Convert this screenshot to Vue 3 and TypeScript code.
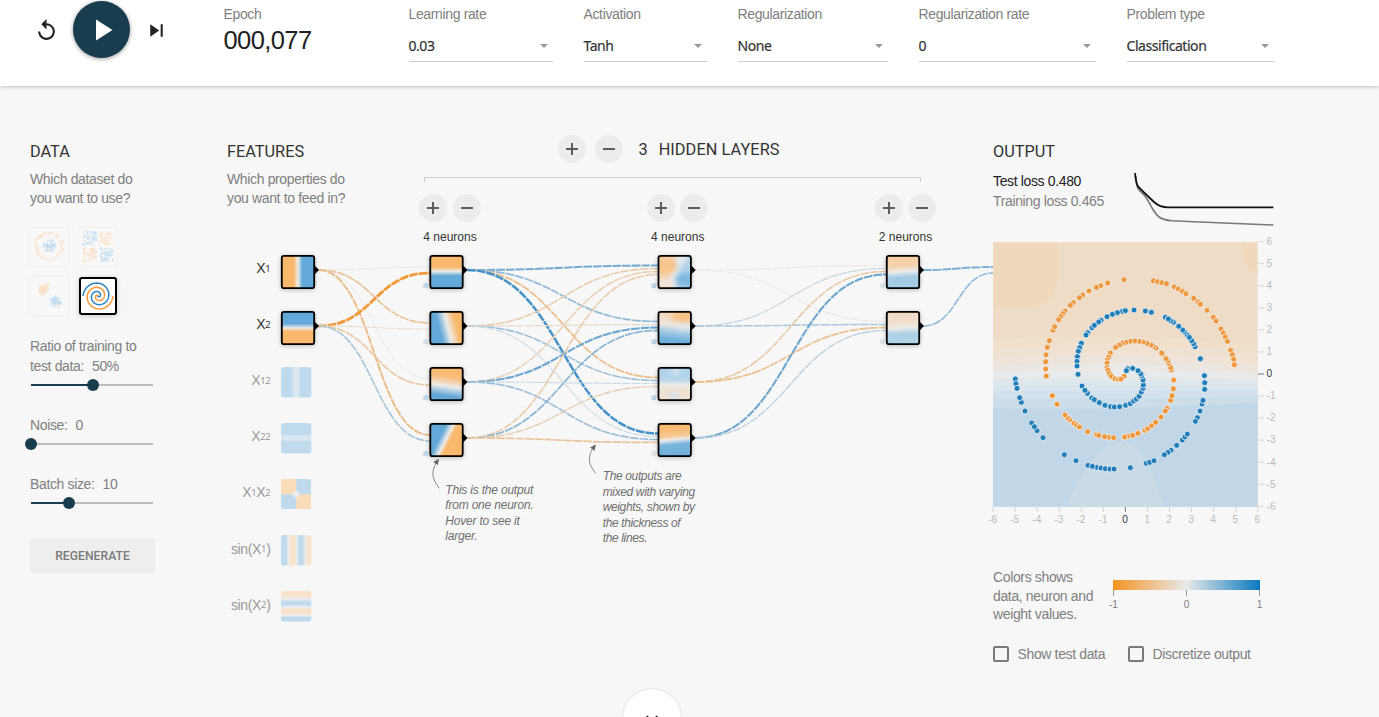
<script setup lang="ts">
type Pt = [number, number]
type Stop = [number, string]
interface Blob { cx: number; cy: number; rx: number; ry: number; fill: string }
interface Unit { id: string; x: number; y: number; dir: [number, number, number, number]; stops: Stop[]; blobs?: Blob[]; bias?: string }

const selects = [
  { label: 'Learning rate', value: '0.03', width: 144 },
  { label: 'Activation', value: 'Tanh', width: 123 },
  { label: 'Regularization', value: 'None', width: 150 },
  { label: 'Regularization rate', value: '0', width: 177 },
  { label: 'Problem type', value: 'Classification', width: 147 },
]

const sliders = [
  { lines: ['Ratio of training to', 'test data:'], value: '50%', at: 50.5 },
  { lines: ['Noise:'], value: '0', at: 0 },
  { lines: ['Batch size:'], value: '10', at: 31 },
]

const layers = ['4 neurons', '4 neurons', '2 neurons']

// Seeded generator, so the dataset thumbnails are the same on each load.
let seed = 11
const rnd = () => {
  seed = (seed * 16807) % 2147483647
  return seed / 2147483647
}
interface Dot { x: number; y: number; c: string }
const ring: Dot[] = []
const xor: Dot[] = []
const gauss: Dot[] = []
for (let i = 0; i < 95; i++) {
  const a = rnd() * Math.PI * 2
  const r1 = rnd() * 6.5
  const r2 = 11 + rnd() * 4
  ring.push({ x: 19.5 + r1 * Math.cos(a), y: 18 + r1 * Math.sin(a), c: 'b' })
  ring.push({ x: 19 + r2 * Math.cos(a * 3), y: 18 + r2 * Math.sin(a * 3), c: 'o' })
}
for (let i = 0; i < 300; i++) {
  const x = 3.5 + rnd() * 31
  const y = 3 + rnd() * 31
  if (Math.abs(x - 19) < 1.2 || Math.abs(y - 18.5) < 1.2) continue
  xor.push({ x, y, c: x < 19 === y < 18.5 ? 'b' : 'o' })
}
for (let i = 0; i < 90; i++) {
  const g = () => (rnd() + rnd() + rnd() - 1.5) * 5.2
  gauss.push({ x: 14 + g(), y: 12.5 + g(), c: 'o' })
  gauss.push({ x: 25.5 + g(), y: 24.5 + g(), c: 'b' })
}
const faintSets = [ring, xor, gauss]

const spiral = (delta: number) => {
  const out: string[] = []
  for (let i = 0; i <= 120; i++) {
    const r = (i / 120) * 15
    const t = (1.75 * i * 2 * Math.PI) / 120 + delta
    out.push(`${(17 + r * Math.sin(t)).toFixed(2)},${(17 + r * Math.cos(t)).toFixed(2)}`)
  }
  return out.join(' ')
}

const O = '#f9b96d'
const B = '#62a8d8'
const W = '#ecebe9'
const LB = '#bfdaed'
const LO = '#fbdcb9'
const PB = '#d8e7f0'

const rows = [270, 326, 382, 438]
const units: Unit[] = [
  { id: 'x1', x: 281, y: 270, dir: [0, 0, 1, 0], stops: [[0.36, O], [0.5, W], [0.64, B]] },
  { id: 'x2', x: 281, y: 326, dir: [0, 0, 0, 1], stops: [[0.36, B], [0.5, W], [0.6, O]] },
  { id: 'a1', x: 429.5, y: 270, dir: [0, 0, 0, 1], bias: '#c6dbea', stops: [[0.35, O], [0.48, W], [0.62, B]] },
  { id: 'a2', x: 429.5, y: 326, dir: [0, 0.25, 1, 0], bias: '#d8e0e6', stops: [[0.2, B], [0.46, W], [0.72, O]] },
  { id: 'a3', x: 429.5, y: 382, dir: [0.15, 0, 0, 1], bias: '#c6dbea', stops: [[0.05, O], [0.25, '#f8c184'], [0.5, W], [0.8, B]] },
  { id: 'a4', x: 429.5, y: 438, dir: [0.1, 0.2, 0.9, 0.6], bias: '#c6dbea', stops: [[0.3, B], [0.52, W], [0.66, O]] },
  {
    id: 'b1', x: 657.7, y: 270, dir: [0, 0, 1, 0.3], bias: '#bdd6e8', stops: [[0, '#f6cb9b'], [0.4, '#f3d3b0'], [0.6, '#e3e9ee'], [0.85, '#b0d2e8']],
    blobs: [{ cx: 8, cy: 10, rx: 10, ry: 8, fill: '#f7c48d' }, { cx: 5, cy: 28, rx: 12, ry: 5, fill: '#f1e6da' }, { cx: 28, cy: 24, rx: 11, ry: 7, fill: '#7db7de' }, { cx: 24, cy: 2, rx: 5, ry: 5, fill: '#e6ebee' }],
  },
  {
    id: 'b2', x: 657.7, y: 326, dir: [0, 0.1, -0.1, 1], bias: '#bdd6e8', stops: [[0, '#f2d5b4'], [0.28, '#ece6df'], [0.5, '#a9cde5'], [0.8, '#6db0dc']],
    blobs: [{ cx: 26, cy: 4, rx: 12, ry: 6, fill: '#f8c084' }, { cx: 3, cy: 7, rx: 7, ry: 4, fill: '#f0e2d2' }, { cx: 25, cy: 15, rx: 8, ry: 2.5, fill: '#dfe8ee' }],
  },
  {
    id: 'b3', x: 657.7, y: 382, dir: [0, 0, 0, 1], bias: '#bdd6e8', stops: [[0, '#a9cfe7'], [0.38, '#b9d6ea'], [0.52, '#eceae7'], [0.75, '#f1e1cf'], [1, '#efe2d4']],
    blobs: [{ cx: 17, cy: 3, rx: 5, ry: 4, fill: '#d4e4ee' }, { cx: 15, cy: 28, rx: 5, ry: 4, fill: '#d2e3ee' }],
  },
  { id: 'b4', x: 657.7, y: 438, dir: [0, 0, 0.1, 1], bias: '#e0e5e8', stops: [[0.2, '#f9bb72'], [0.42, '#f6c994'], [0.53, W], [0.68, '#79b5dd'], [1, '#6fb1dc']] },
  { id: 'c1', x: 886, y: 270, dir: [0, 0, 0.08, 1], bias: '#dde4e9', stops: [[0, '#f4cfa4'], [0.35, '#f4d2ab'], [0.52, W], [0.7, '#a3cbe5'], [1, '#a6cde5']] },
  { id: 'c2', x: 886, y: 326, dir: [0, 0, 0.05, 1], bias: '#dde4e9', stops: [[0, '#f1dac0'], [0.35, '#f1dfcc'], [0.52, W], [0.7, '#acd0e6'], [1, '#b3d3e7']] },
]

interface Dim { id: string; y: number; dir: [number, number, number, number]; stops: Stop[] }
const dimmed: Dim[] = [
  { id: 'sq1', y: 367, dir: [0, 0, 1, 0], stops: [[0.34, LB], [0.42, PB], [0.58, PB], [0.66, LB]] },
  { id: 'sq2', y: 423, dir: [0, 0, 0, 1], stops: [[0.36, LB], [0.43, PB], [0.55, PB], [0.62, LB]] },
  { id: 'sin1', y: 535, dir: [0, 0, 1, 0], stops: [[0, LB], [0.15, LB], [0.27, '#f0ece8'], [0.36, '#fae2c8'], [0.45, '#fae2c8'], [0.53, '#e9edf0'], [0.6, LB], [0.7, LB], [0.82, '#f0ece8'], [0.92, '#fae2c8']] },
  { id: 'sin2', y: 591, dir: [0, 0, 0, 1], stops: [[0, '#fae2c8'], [0.14, '#fae2c8'], [0.25, '#eeedec'], [0.36, LB], [0.44, LB], [0.53, '#eeedec'], [0.6, '#fae2c8'], [0.7, '#fae2c8'], [0.8, '#eeedec'], [0.87, LB]] },
]

const names = [
  { y: 273.2, on: true, parts: ['X', '1'] },
  { y: 329.2, on: true, parts: ['X', '2'] },
  { y: 385.2, on: false, parts: ['X', '12'] },
  { y: 441.2, on: false, parts: ['X', '22'] },
  { y: 497.2, on: false, parts: ['X', '1', 'X', '2'] },
  { y: 553.5, on: false, parts: ['sin(X', '1', ')'] },
  { y: 609.5, on: false, parts: ['sin(X', '2', ')'] },
]

// Weights by layer: weights[source][target]; negative is orange, positive is blue.
const stages = [
  { from: 318, to: 430, weights: [[-0.02, -0.42, -0.02, -0.52], [-0.95, -0.1, -0.38, 0.33]] },
  { from: 467, to: 658, weights: [[0.56, 0.42, -0.48, 0.8], [-0.33, -0.16, 0.35, 0.12], [-0.3, 0.6, 0.12, 0.37], [-0.34, 0.45, -0.28, -0.42]] },
  { from: 695, to: 886, weights: [[-0.02, -0.02], [0.16, 0.3], [-0.36, -0.46], [0.6, 0.22]] },
  { from: 923, to: 993, weights: [[0.53], [0.4]] },
]
const mix = (a: number[], b: number[], k: number) => `rgb(${a.map((v, i) => Math.round(v + (b[i] - v) * k)).join(',')})`
const links = stages.flatMap(s => {
  const n = s.weights.length
  return s.weights.flatMap((ws, i) => ws.map((w, j) => {
    const sy = rows[i]
    const ty = rows[j] + ((i - (n - 1) / 2) / n) * 12
    const mx = (s.from + s.to) / 2
    const k = Math.abs(w)
    return {
      d: `M${s.from},${sy}C${mx},${sy} ${mx},${ty} ${s.to},${ty}`,
      color: mix([229, 230, 231], w < 0 ? [242, 145, 35] : [18, 120, 190], Math.min(1, k * 0.95)),
      width: 0.9 + k * 2,
    }
  }))
})

const orange: Pt[] = [[417, 449], [368, 459], [347, 467], [334, 472], [312, 483], [293, 495], [283, 503], [265, 518], [256, 526], [240, 543], [233, 551], [227, 560], [221, 569], [204, 601], [209, 590], [193, 632], [187, 652], [183, 674], [182, 695], [182, 717], [184, 738], [202, 797], [216, 823], [254, 869], [247, 863], [240, 855], [267, 880], [275, 886], [283, 891], [308, 905], [334, 914], [341, 916], [371, 922], [359, 920], [386, 923], [428, 919], [419, 921], [443, 916], [459, 910], [480, 901], [488, 896], [500, 887], [512, 877], [528, 861], [546, 835], [541, 843], [557, 811], [561, 797], [565, 776], [566, 750], [559, 720], [557, 713], [551, 700], [548, 693], [543, 686], [533, 673], [530, 669], [513, 654], [505, 649], [498, 645], [486, 640], [474, 636], [462, 634], [449, 633], [435, 634], [423, 637], [412, 640], [403, 645], [392, 652], [376, 669], [371, 681], [367, 690], [366, 699], [366, 713], [369, 721], [373, 731], [379, 739], [390, 746], [400, 748], [417, 739], [408, 747],
  [505, 452], [518, 455], [531, 458], [544, 461], [568, 471], [580, 477], [592, 484], [603, 491], [635, 513], [626, 505], [640, 517], [646, 523], [666, 541], [685, 562], [693, 573], [708, 597], [715, 609], [721, 621], [727, 634], [737, 661], [742, 674], [746, 688], [748, 704]]
const blue: Pt[] = [[91, 747], [93, 761], [96, 775], [109, 817], [104, 803], [120, 843], [140, 879], [156, 902], [148, 890], [174, 923], [238, 974], [273, 992], [309, 1006], [335, 1012], [322, 1009], [348, 1014], [361, 1016], [375, 1017], [387, 1017], [436, 1013], [484, 1000], [494, 997], [507, 992], [558, 961], [549, 967], [538, 974], [575, 946], [592, 930], [600, 921], [607, 912], [637, 863], [631, 874], [645, 843], [651, 822], [654, 811], [659, 778], [659, 758], [658, 737], [646, 686], [630, 650], [626, 641], [620, 632], [606, 614], [598, 605], [593, 600], [613, 622], [581, 589], [565, 577], [557, 572], [541, 562], [550, 567], [499, 547], [481, 543], [447, 540], [412, 544], [421, 542], [397, 548], [382, 553], [366, 560], [348, 571], [341, 576], [321, 593], [328, 586], [308, 608], [303, 615], [289, 640], [284, 653], [280, 664], [277, 680], [276, 694], [276, 708], [279, 733], [291, 768], [307, 790], [300, 781], [320, 804], [328, 809], [343, 818], [360, 826], [377, 830], [388, 831], [404, 830], [422, 826], [436, 821], [446, 813], [454, 807], [462, 799], [469, 786], [474, 775], [475, 765], [474, 750], [470, 737], [467, 731], [459, 722], [428, 716], [424, 722], [443, 715]]

// Each band runs down from a curved upper edge: left, middle and right heights.
const bands: [number, number, number, string][] = [
  [632, 620, 650, '#f0dfca'],
  [655, 643, 672, '#efe1d0'],
  [678, 664, 694, '#eee3d6'],
  [698, 683, 714, '#ece5dd'],
  [716, 702, 730, '#ebe8e5'],
  [730, 720, 742, '#e8eaeb'],
  [746, 740, 752, '#e1e8ec'],
  [762, 758, 764, '#dae5ec'],
  [782, 782, 778, '#d2e1eb'],
  [806, 806, 796, '#cadde9'],
  [834, 834, 818, '#c1d7e7'],
]
const bandPath = (b: [number, number, number, string]) => `M24,${b[0]}Q420,${b[1] * 2 - (b[0] + b[2]) / 2} 818,${b[2]}V1130H24Z`

const ticks = Array.from({ length: 13 }, (_, i) => i - 6)
const unitPx = 22.05
</script>

<template>
  <div class="page">
    <header class="bar">
      <div class="controls">
        <svg class="reset" viewBox="0 0 24 24"><path d="M12 5V1L7 6l5 5V7c3.31 0 6 2.69 6 6s-2.69 6-6 6-6-2.69-6-6H4c0 4.42 3.58 8 8 8s8-3.58 8-8-3.58-8-8-8z" /></svg>
        <button class="play"><svg viewBox="0 0 24 24"><path d="M8 5v14l11-7z" /></svg></button>
        <svg class="step" viewBox="0 0 24 24"><path d="M6 18l8.5-6L6 6v12zM16 6v12h2V6h-2z" /></svg>
      </div>
      <div class="epoch">
        <div class="label">Epoch</div>
        <div class="count">000,077</div>
      </div>
      <div class="selects">
        <div v-for="s in selects" :key="s.label" class="select" :style="{ width: s.width + 'px' }">
          <div class="label">{{ s.label }}</div>
          <div class="field"><span>{{ s.value }}</span><i class="caret"></i></div>
        </div>
      </div>
    </header>

    <main class="main">
      <section class="data">
        <h3>Data</h3>
        <p>Which dataset do<br />you want to use?</p>
        <div class="sets">
          <div v-for="(set, k) in faintSets" :key="k" class="set">
            <svg viewBox="0 0 38 38"><circle v-for="(d, i) in set" :key="i" :cx="d.x" :cy="d.y" r=".75" :class="d.c" /></svg>
          </div>
          <div class="set chosen">
            <svg viewBox="0 0 34 34">
              <polyline class="sb" :points="spiral(0)" />
              <polyline class="so" :points="spiral(Math.PI)" />
            </svg>
          </div>
        </div>
        <div v-for="s in sliders" :key="s.value" class="slider">
          <div class="slabel"><template v-for="(l, i) in s.lines" :key="l"><br v-if="i > 0" />{{ l }}</template><span class="val">{{ s.value }}</span></div>
          <div class="track">
            <div class="rail"><div class="fill" :style="{ width: s.at + '%' }"></div></div>
            <div class="knob" :style="{ left: s.at + '%' }"></div>
          </div>
        </div>
        <button class="regen">Regenerate</button>
      </section>

      <section class="net">
        <div class="nethead">
          <div class="feat">
            <h3>Features</h3>
            <p>Which properties do<br />you want to feed in?</p>
          </div>
          <div class="hidden">
            <div class="title">
              <span class="round"><i class="plus"></i></span>
              <span class="round"><i></i></span>
              <b class="n">3</b><b>Hidden layers</b>
            </div>
            <div class="bracket"></div>
            <div class="layers">
              <div v-for="(l, i) in layers" :key="i" class="layer">
                <div class="pair"><span class="round"><i class="plus"></i></span><span class="round"><i></i></span></div>
                <div class="nlabel">{{ l }}</div>
              </div>
            </div>
          </div>
        </div>

        <svg class="graph" viewBox="227 245 766 400">
          <defs>
            <linearGradient v-for="u in [...units, ...dimmed]" :id="'g-' + u.id" :key="u.id" :x1="u.dir[0]" :y1="u.dir[1]" :x2="u.dir[2]" :y2="u.dir[3]">
              <stop v-for="(s, i) in u.stops" :key="i" :offset="s[0]" :stop-color="s[1]" />
            </linearGradient>
            <filter id="soft" x="-80%" y="-80%" width="260%" height="260%"><feGaussianBlur stdDeviation="2.8" /></filter>
            <filter id="dot" x="-80%" y="-80%" width="260%" height="260%"><feGaussianBlur stdDeviation="0.9" /></filter>
            <marker id="tip" markerWidth="7" markerHeight="7" refX="4" refY="3" orient="auto" markerUnits="userSpaceOnUse"><path d="M0,0.2L6,3L0,5.8Z" fill="#666" /></marker>
          </defs>
          <path v-for="(l, i) in links" :key="i" class="link" :d="l.d" :stroke="l.color" :stroke-width="l.width" />

          <text v-for="n in names" :key="n.y" x="270.5" :y="n.y" class="name" :class="{ off: !n.on }"><tspan v-for="(p, i) in n.parts" :key="i" :class="{ small: i % 2 === 1 }" :dy="i % 2 === 1 ? -1.5 : i ? 1.5 : 0">{{ p }}</tspan></text>

          <rect v-for="d in dimmed" :key="d.id" x="281" :y="d.y" width="30.3" height="30.5" rx="2.5" :fill="`url(#g-${d.id})`" />
          <svg x="281" y="479" width="30.3" height="30.3" viewBox="0 0 30 30">
            <clipPath id="round"><rect width="30" height="30" rx="2.5" /></clipPath>
            <g clip-path="url(#round)">
              <rect width="30" height="30" :fill="LB" />
              <path d="M0,0H15V30H30V15H0Z" :fill="LO" />
              <circle cx="15" cy="15" r="3.2" fill="#eef0f1" filter="url(#dot)" />
            </g>
          </svg>

          <g v-for="u in units" :key="u.id">
            <rect v-if="u.bias" :x="u.x - 6.3" :y="u.y + 13.2" width="5" height="5" :fill="u.bias" />
            <path class="port" :d="`M${u.x + 33.5},${u.y - 4.5}L${u.x + 38},${u.y}L${u.x + 33.5},${u.y + 4.5}Z`" />
            <g class="tile">
              <svg :x="u.x + 1" :y="u.y - 14" width="32" height="32" viewBox="0 0 32 32">
                <rect width="32" height="32" :fill="`url(#g-${u.id})`" />
                <ellipse v-for="(b, i) in u.blobs || []" :key="i" :cx="b.cx" :cy="b.cy" :rx="b.rx" :ry="b.ry" :fill="b.fill" filter="url(#soft)" />
              </svg>
              <rect class="frame" :x="u.x + 0.8" :y="u.y - 14.2" width="32.4" height="32.4" rx="2.2" />
            </g>
          </g>

          <path class="arrow" d="M439.3,488.3C431,478 431,470 437.8,460.5" marker-end="url(#tip)" />
          <path class="arrow" d="M595.7,473.3C587,463 588,455 594.6,446" marker-end="url(#tip)" />
          <text class="note">
            <tspan x="445.3" y="493.9">This is the output</tspan>
            <tspan x="445.3" y="509.4">from one neuron.</tspan>
            <tspan x="445.3" y="524.9">Hover to see it</tspan>
            <tspan x="445.3" y="540.4">larger.</tspan>
          </text>
          <text class="note tight">
            <tspan x="602.7" y="480.2">The outputs are</tspan>
            <tspan x="602.7" y="495.7">mixed with varying</tspan>
            <tspan x="602.7" y="511.2">weights, shown by</tspan>
            <tspan x="602.7" y="526.7">the thickness of</tspan>
            <tspan x="602.7" y="542.2">the lines.</tspan>
          </text>
        </svg>
      </section>

      <section class="out">
        <h3>Output</h3>
        <div class="loss">
          <div class="stats">
            <div class="test">Test loss 0.480</div>
            <div class="train">Training loss 0.465</div>
          </div>
          <svg class="chart" viewBox="0 0 140 58">
            <path stroke="#777" stroke-width="1.6" d="M1.6,5C2.2,12 2.4,16 5,19L10.5,24.5Q14,29 18,37Q22,43.5 25,46Q29,49 38,49.8L60,50.8L139.3,54" />
            <path stroke="#111" stroke-width="1.8" d="M1,2C2,10 2,13 4.5,16L10.5,22L20,31Q26,36.4 34,36.4L139.3,36.3" />
          </svg>
        </div>
        <svg class="plot" viewBox="983 236 300 292">
          <svg x="993" y="242" width="264.7" height="264.7" viewBox="24 336 794 794">
            <rect x="24" y="336" width="794" height="794" fill="#efdcc6" />
            <path d="M24,336H218V440Q214,532 120,532H24Z" fill="#f0d8bd" />
            <path d="M772,336V380Q785,425 818,434V336Z" fill="#f0d8bd" />
            <path v-for="(b, i) in bands" :key="i" :d="bandPath(b)" :fill="b[3]" />
            <path d="M242,1130C290,1010 360,935 415,935C475,935 520,1070 534,1130Z" fill="#c9dbe6" />
            <circle v-for="(p, i) in orange" :key="'o' + i" class="pt po" :cx="p[0]" :cy="p[1]" r="9" />
            <circle v-for="(p, i) in blue" :key="'b' + i" class="pt pb" :cx="p[0]" :cy="p[1]" r="9" />
          </svg>
          <g v-for="t in ticks" :key="t" :class="{ zero: t === 0 }" class="tick">
            <line :x1="1125.4 + t * unitPx" :x2="1125.4 + t * unitPx" y1="507" y2="512" />
            <line x1="1258" x2="1264" :y1="374 - t * unitPx" :y2="374 - t * unitPx" />
            <text class="mid" :x="1125 + t * unitPx" y="523">{{ t }}</text>
            <text x="1266.5" :y="377.3 - t * unitPx">{{ t }}</text>
          </g>
        </svg>
        <div class="legend">
          <p>Colors shows<br />data, neuron and<br />weight values.</p>
          <div class="scale">
            <div class="ramp"></div>
            <div class="marks"><span>-1</span><span>0</span><span>1</span></div>
          </div>
        </div>
        <div class="checks">
          <label><i></i>Show test data</label>
          <label><i></i>Discretize output</label>
        </div>
      </section>

      <div class="more"><svg viewBox="0 0 24 24"><path d="M16.59 8.59L12 13.17 7.41 8.59 6 10l6 6 6-6z" /></svg></div>
    </main>
  </div>
</template>

<style>
body {
  margin: 0;
  background: #f7f7f7;
}
</style>

<style scoped>
.page {
  height: 717px;
  overflow: hidden;
  background: #f7f7f7;
  font: 14px/18.5px "Liberation Sans", Arial, sans-serif;
  letter-spacing: -0.36px;
  color: #808080;
}
h3,
p {
  margin: 0;
}
h3,
.title b {
  font: 400 16.3px/20px Roboto, sans-serif;
  letter-spacing: 0;
  color: #333;
  text-transform: uppercase;
}
.bar {
  position: relative;
  height: 86px;
  background: #fff;
  box-shadow: 0 1px 4px rgba(0, 0, 0, 0.22);
  display: flex;
}
.controls {
  width: 223.5px;
  display: flex;
}
.controls svg {
  fill: #212121;
}
.reset {
  width: 25px;
  height: 25px;
  margin: 17.5px 0 0 33.7px;
}
.play {
  width: 57px;
  height: 57px;
  margin: 1px 0 0 14.8px;
  padding: 0;
  border: 0;
  border-radius: 50%;
  background: #183d4e;
  box-shadow: 0 1px 4px rgba(0, 0, 0, 0.4);
}
.controls .play svg {
  display: block;
  width: 36px;
  height: 36px;
  margin-left: 10.5px;
  fill: #fff;
}
.step {
  width: 25px;
  height: 25px;
  margin: 17.5px 0 0 13.5px;
}
.label {
  line-height: 20px;
  margin-top: 4px;
}
.epoch {
  width: 185px;
}
.count {
  font-size: 25.5px;
  line-height: 30px;
  letter-spacing: -0.6px;
  color: #212121;
  margin-top: 1px;
}
.selects {
  display: flex;
  gap: 31px;
}
.field {
  height: 30px;
  margin-top: 7px;
  border-bottom: 1px solid #ccc;
  display: flex;
  align-items: center;
  justify-content: space-between;
  font: 14px/30px "Noto Sans", sans-serif;
  letter-spacing: -0.45px;
  -webkit-text-stroke: 0.2px #333;
  color: #333;
}
.caret {
  border: 4.5px solid transparent;
  border-top-color: #999;
  border-bottom: 0;
  margin-right: 4.5px;
}
.main {
  position: relative;
  height: 631px;
  overflow: hidden;
  display: grid;
  grid-template-columns: 197px 766px 1fr;
  padding-left: 30px;
}
.data,
.out,
.feat {
  padding-top: 56px;
}
.data {
  width: 125px;
}
.data p,
.feat p {
  margin-top: 8px;
  white-space: nowrap;
}
.sets {
  display: grid;
  grid-template-columns: 38px 38px;
  gap: 11px;
  margin: 21px 0;
}
.set {
  box-sizing: border-box;
  height: 38px;
  background: #f8f8f8;
  border-radius: 3px;
  box-shadow: 0 0 2px rgba(0, 0, 0, 0.1);
}
.set svg {
  display: block;
  width: 100%;
}
.set .b {
  fill: #c3dcee;
}
.set .o {
  fill: #fadec1;
}
.set.chosen {
  border: 2px solid #000;
  background: #fff;
  box-shadow: 0 1px 5px rgba(0, 0, 0, 0.2);
}
.chosen polyline {
  fill: none;
  stroke-width: 1.5;
}
.sb {
  stroke: #2f86c4;
}
.so {
  stroke: #f39a3a;
}
.slider {
  margin-bottom: 21px;
}
.slabel {
  line-height: 20px;
  white-space: nowrap;
}
.val {
  margin-left: 8px;
}
.track {
  position: relative;
  height: 18px;
  width: 122px;
  margin-left: 1px;
  display: flex;
  align-items: center;
}
.rail {
  width: 100%;
  height: 2px;
  background: #bbb;
}
.fill {
  height: 2px;
  background: #183d4e;
}
.knob {
  position: absolute;
  width: 12px;
  height: 12px;
  margin-left: -6px;
  border-radius: 50%;
  background: #183d4e;
}
.regen {
  display: block;
  width: 125px;
  height: 34.5px;
  margin-top: 26px;
  padding: 1px 0 0;
  border: 0;
  border-radius: 2px;
  background: #eee;
  color: #7a7a7a;
  font: 500 12.2px/34px Roboto, sans-serif;
  text-transform: uppercase;
}
.nethead {
  display: flex;
  height: 159px;
}
.feat {
  width: 197px;
}
.hidden {
  width: 497px;
  padding-top: 48.5px;
}
.title {
  display: flex;
  align-items: center;
  padding-left: 133.5px;
}
.title b {
  padding-top: 2px;
}
.round {
  width: 28px;
  height: 28px;
  border-radius: 50%;
  background: #ececec;
  display: grid;
  place-items: center;
}
.title .round {
  margin-right: 9.5px;
}
.round i {
  position: relative;
  width: 12px;
  height: 2px;
  background: #5c5c5c;
}
.round .plus::after {
  content: "";
  position: absolute;
  left: 5px;
  top: -5px;
  width: 2px;
  height: 12px;
  background: #5c5c5c;
}
.title .n {
  margin: 0 11px 0 6px;
}
.title b:last-child {
  letter-spacing: 0.08px;
}
.bracket {
  height: 4px;
  margin-top: 14.5px;
  border: 1px solid #ccc;
  border-bottom: 0;
}
.layers {
  display: flex;
  justify-content: space-between;
  margin: 12px -15px 0 -5px;
}
.layer {
  width: 61.5px;
}
.pair {
  display: flex;
  justify-content: space-between;
}
.nlabel {
  margin: 7px 0 0 4.3px;
  font-size: 12px;
  line-height: 16px;
  letter-spacing: 0;
  color: #333;
  white-space: nowrap;
}
.graph {
  display: block;
  width: 766px;
  height: 400px;
}
.link {
  fill: none;
  stroke-dasharray: 8.7 1;
}
.name {
  text-anchor: end;
  font-size: 14px;
  fill: #333;
}
.name.off {
  fill: #999;
}
.small {
  font: 9.4px "Noto Sans", sans-serif;
  letter-spacing: -0.2px;
}
.port {
  fill: #000;
}
.tile {
  filter: drop-shadow(0 1px 2px rgba(0, 0, 0, 0.25));
}
.frame {
  fill: none;
  stroke: #000;
  stroke-width: 1.8;
}
.arrow {
  fill: none;
  stroke: #888;
  stroke-width: 1;
}
.note {
  font-size: 12px;
  font-style: italic;
  letter-spacing: -0.2px;
  fill: #707070;
}
.tight {
  letter-spacing: -0.36px;
}
.loss {
  display: flex;
  height: 65px;
  margin-top: 8.8px;
}
.stats {
  width: 141px;
  line-height: 20.5px;
}
.test {
  color: #222;
}
.chart {
  width: 140px;
  height: 58px;
  fill: none;
}
.plot {
  display: block;
  width: 300px;
  height: 292px;
  margin-left: -10px;
}
.pt {
  stroke: #f1f1f1;
  stroke-width: 2.5;
}
.po {
  fill: #f0973a;
}
.pb {
  fill: #1f7fbc;
}
.tick line {
  stroke: #d5d5d5;
}
.tick text {
  font-size: 10.2px;
  letter-spacing: 0;
  fill: #bbb;
}
.tick.zero line {
  stroke: #777;
}
.tick.zero text {
  fill: #333;
}
.mid {
  text-anchor: middle;
}
.legend {
  display: flex;
  margin-top: 40.5px;
  line-height: 18.5px;
}
.legend p {
  width: 120px;
  white-space: nowrap;
}
.scale {
  width: 147px;
  padding-top: 12px;
}
.ramp {
  height: 10px;
  background: linear-gradient(90deg, #f59322, #e8eaeb 50%, #0877bd);
}
.marks {
  display: flex;
  justify-content: space-between;
  margin: 0 -9.5px;
  font-size: 10.2px;
  line-height: 18px;
  letter-spacing: 0;
}
.marks span {
  width: 20px;
  text-align: center;
}
.marks span::before {
  content: "";
  display: block;
  width: 1px;
  height: 6px;
  margin: 0 auto;
  background: #999;
}
.checks {
  display: flex;
  margin-top: 20.5px;
}
.checks label {
  display: flex;
  align-items: center;
  width: 135px;
  line-height: 20px;
  white-space: nowrap;
}
.checks i {
  box-sizing: border-box;
  flex: none;
  width: 16px;
  height: 16px;
  margin-right: 8.5px;
  border: 2px solid #7a7a7a;
  border-radius: 2px;
}
.more {
  position: absolute;
  left: 623px;
  top: 603px;
  width: 58px;
  height: 58px;
  border-radius: 50%;
  background: #fff;
  box-shadow: 0 0 2px rgba(0, 0, 0, 0.2);
}
.more svg {
  display: block;
  width: 24px;
  height: 24px;
  margin: 17.5px 0 0 17px;
}
</style>
